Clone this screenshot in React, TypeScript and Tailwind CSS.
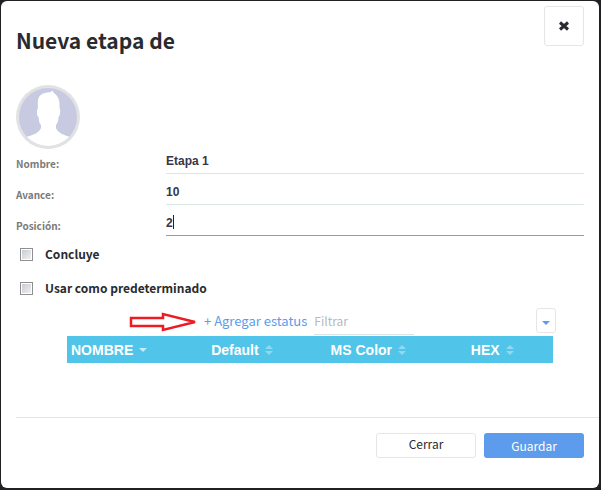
import { useState } from 'react'

const FIELDS = [
  { id: 'nombre', label: 'Nombre:', value: 'Etapa 1' },
  { id: 'avance', label: 'Avance:', value: '10' },
  { id: 'posicion', label: 'Posición:', value: '2', active: true },
]

const CHECKS = [
  { id: 'concluye', label: 'Concluye' },
  { id: 'predeterminado', label: 'Usar como predeterminado' },
]

const COLUMNS = [
  { label: 'NOMBRE', width: 'w-[23%] pl-1 text-left', sorted: true },
  { label: 'Default', width: 'w-[26%] text-center', sorted: false },
  { label: 'MS Color', width: 'w-[26%] text-center', sorted: false },
  { label: 'HEX', width: 'w-[25%] text-center', sorted: false },
]

function Avatar() {
  return (
    <svg viewBox="0 0 64 64" className="size-16" role="img" aria-label="Avatar">
      <defs>
        <clipPath id="avatar-clip">
          <circle cx="32" cy="32" r="29" />
        </clipPath>
      </defs>
      <circle cx="32" cy="32" r="32" fill="#e1e2e3" />
      <circle cx="32" cy="32" r="29" fill="#c7cae1" />
      <path
        clipPath="url(#avatar-clip)"
        fill="#fff"
        d="M22 23C21 14 23 9 29 8C33 7.500 35 7 37 5.500C36.500 8 39 8 41 11C44 15 43.500 19 43.500 23C45 25 44 31 42.500 32C42.500 36 41.500 38 40 40V43C42 48 48 50 54 52V64H10V52C17 50 23 48 25 43V40C23 38 23 36 22.500 32C20.500 31 20.500 25 22 23Z"
      />
    </svg>
  )
}

function SortIcon({ sorted }: { sorted: boolean }) {
  if (sorted) {
    return (
      <svg viewBox="0 0 8 10" className="ml-[6px] inline-block h-[10px] w-2 align-baseline" fill="#c5ebf8" aria-hidden="true">
        <path d="M0 3H8L4 7Z" />
      </svg>
    )
  }
  return (
    <svg viewBox="0 0 8 10" className="ml-[6px] inline-block h-[10px] w-2 align-baseline" fill="#91d8f1" aria-hidden="true">
      <path d="M4 0L8 4H0ZM0 6H8L4 10Z" />
    </svg>
  )
}

function Arrow() {
  return (
    <svg viewBox="0 0 70 20" className="h-5 w-[70px]" fill="none" stroke="#ed1c24" strokeWidth="2.5" aria-hidden="true">
      <path d="M2 6H34V2L66 10L34 18V14H2Z" />
    </svg>
  )
}

export default function App() {
  const [values, setValues] = useState<Record<string, string>>(
    Object.fromEntries(FIELDS.map(f => [f.id, f.value]))
  )

  return (
    <div className="min-h-screen bg-[#202125] pt-px pr-[2px] pb-[2px] pl-px font-['Noto_Sans_CJK_SC',sans-serif] text-[#292b2f]">
      <div role="dialog" aria-labelledby="title" className="flex min-h-[487px] flex-col rounded-md bg-white">
        <header className="flex items-start justify-between pt-[5px] pr-[15px] pl-[15px]">
          <h1 id="title" className="pt-[18px] text-[21px] leading-8 font-bold">Nueva etapa de</h1>
          <button type="button" aria-label="Cerrar ventana" className="flex size-10 items-center justify-center rounded-[3px] border border-[#e6e6e6]">
            <svg viewBox="0 0 10 10" className="size-[10px]" stroke="#292b2f" strokeWidth="3" aria-hidden="true">
              <path d="M1 1.5L9 8.5M9 1.5L1 8.5" />
            </svg>
          </button>
        </header>

        <form id="etapa" className="px-[15px] pt-[29px]">
          <Avatar />
          <div className="-mt-px">
            {FIELDS.map(f => (
              <div key={f.id} className="flex h-[31px] items-start">
                <label htmlFor={f.id} className="w-[150px] pt-2 text-[10px] leading-4 font-bold text-[#7b7b7b]">{f.label}</label>
                <div className="relative flex-1">
                  <input
                    id={f.id}
                    value={values[f.id]}
                    onChange={e => setValues({ ...values, [f.id]: e.target.value })}
                    className={`block h-[26px] w-full border-b font-['Liberation_Sans',sans-serif] text-[12px] font-bold text-[#35364a] outline-none ${f.active ? 'border-[#5dade8]' : 'border-[#dce6e6]'}`}
                  />
                  {f.active && <span className="absolute top-[5px] left-[7px] h-[14px] w-px bg-[#222]" />}
                </div>
              </div>
            ))}
          </div>

          <div className="pt-[3px]">
            {CHECKS.map(c => (
              <label key={c.id} htmlFor={c.id} className="flex h-[34px] items-start gap-3 pl-1 text-[12px] leading-5 font-bold">
                <input
                  id={c.id}
                  type="checkbox"
                  className="mt-[4px] size-[13px] appearance-none border border-[#8e8f8f] bg-linear-to-br from-[#c5c8ce] to-[#f4f4f5] ring-1 ring-white ring-inset checked:bg-[#5d9cec]"
                />
                {c.label}
              </label>
            ))}
          </div>
        </form>

        <section className="-mt-1 pr-[46px] pl-[66px]">
          <div className="flex h-7 items-start">
            <div className="pt-1 pl-[62px]"><Arrow /></div>
            <a href="#agregar" className="ml-[5px] pt-[3px] text-[13px] leading-5 text-[#5d9cec]">+ Agregar estatus</a>
            <input
              aria-label="Filtrar"
              placeholder="Filtrar"
              className="ml-[7px] h-[27px] w-[100px] border-b border-[#dce3e6] pb-[2px] text-[12px] outline-none placeholder:text-[#b4b9c5]"
            />
            <button type="button" aria-label="Columnas" className="-mr-[3px] ml-auto flex h-[25px] w-5 items-center justify-center rounded-[3px] border border-[#e6e6e6]">
              <svg viewBox="0 0 8 4" className="mt-1 h-1 w-2" fill="#5d9cec" aria-hidden="true">
                <path d="M0 0H8L4 4Z" />
              </svg>
            </button>
          </div>
          <table className="w-full table-fixed bg-[#51c4ea] font-['Liberation_Sans',sans-serif] text-[14px] text-white">
            <thead>
              <tr className="h-[27px]">
                {COLUMNS.map(c => (
                  <th key={c.label} className={`${c.width} pt-[2px] font-bold whitespace-nowrap`}>
                    {c.label}
                    <SortIcon sorted={c.sorted} />
                  </th>
                ))}
              </tr>
            </thead>
          </table>
        </section>

        <footer className="mt-auto ml-[15px] flex justify-end gap-2 border-t border-[#e5e5e5] pt-[15px] pr-[15px] pb-[30px] text-[12px]">
          <button type="button" className="h-[25px] w-[100px] rounded-[3px] border border-[#e6e6e6] pb-1 leading-5">Cerrar</button>
          <button type="submit" form="etapa" className="h-[25px] w-[100px] rounded-[3px] bg-[#5d9cec] leading-5 text-white">Guardar</button>
        </footer>
      </div>
    </div>
  )
}
